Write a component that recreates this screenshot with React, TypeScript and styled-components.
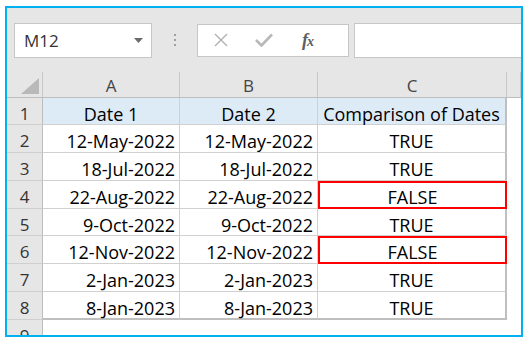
import styled, { createGlobalStyle } from 'styled-components'

const GlobalStyle = createGlobalStyle`
  html, body {
    margin: 0;
    padding: 0;
    background: #ffffff;
  }
  body {
    font-family: "Open Sans", "Liberation Sans", sans-serif;
  }
`

const Frame = styled.div`
  margin: 6px 0 0 5px;
  width: 514px;
  height: 327px;
  border: 2px solid #00b0f0;
  overflow: hidden;
  background: #ffffff;
  display: flex;
  flex-direction: column;
`

const FormulaBar = styled.div`
  height: 64px;
  flex-shrink: 0;
  background: #e6e6e6;
  display: flex;
  align-items: center;
  padding: 0 0 0 7px;
`

const NameBox = styled.div`
  box-sizing: border-box;
  width: 138px;
  height: 35px;
  background: #ffffff;
  border: 1px solid #c6c6c6;
  display: flex;
  align-items: center;
  justify-content: space-between;
  padding: 0 8px 0 9px;
  font-size: 17px;
  color: #333333;
`

const Dots = styled.div`
  width: 45px;
  display: flex;
  flex-direction: column;
  align-items: center;
  gap: 3px;

  span {
    width: 2px;
    height: 2px;
    background: #a0a0a0;
  }
`

const ButtonBox = styled.div`
  width: 152px;
  height: 33px;
  box-sizing: border-box;
  background: #ffffff;
  border: 1px solid #c6c6c6;
  display: flex;
  align-items: center;
  padding: 0 0 0 16px;
  gap: 27px;
`

const Fx = styled.span`
  font-family: "Liberation Serif", serif;
  font-style: italic;
  font-weight: bold;
  font-size: 18px;
  color: #5e5e5e;
  margin-left: 2px;
  letter-spacing: -1px;

  sub {
    font-size: 14px;
    vertical-align: 0;
  }
`

const FormulaInput = styled.div`
  flex: 1;
  margin-left: 5px;
  height: 35px;
  box-sizing: border-box;
  background: #ffffff;
  border: 1px solid #c6c6c6;
  border-right: none;
`

const Sheet = styled.div`
  flex: 1;
  display: flex;
  flex-direction: column;
`

const Row = styled.div<{ $h: number }>`
  display: grid;
  grid-template-columns: 36px 137px 138px 189px 1fr;
  grid-template-rows: ${(p) => p.$h}px;
  height: ${(p) => p.$h}px;
  flex-shrink: 0;
  line-height: 20px;
`

const HeadCell = styled.div`
  background: #e6e6e6;
  border-right: 1px solid #c8c8c8;
  border-bottom: 1px solid #bdbdbd;
  display: flex;
  align-items: center;
  justify-content: center;
  font-size: 17px;
  color: #444444;
  padding-top: 2px;
  box-sizing: border-box;
  min-height: 0;
`

const Corner = styled(HeadCell)`
  align-items: flex-end;
  justify-content: flex-end;
  padding: 0 3px 3px 0;
`

const RowNum = styled.div`
  background: #e6e6e6;
  border-right: 1px solid #bdbdbd;
  border-bottom: 1px solid #cfcfcf;
  display: flex;
  align-items: center;
  justify-content: center;
  font-size: 17px;
  color: #333333;
  box-sizing: border-box;
  padding-top: 5px;
  min-height: 0;
`

const Cell = styled.div<{ $align?: 'center' | 'right'; $head?: boolean; $flag?: boolean; $last?: boolean; $bottom?: boolean }>`
  background: ${(p) => (p.$head ? '#ddebf7' : '#ffffff')};
  border-right: ${(p) => (p.$last ? '2px solid #bfbfbf' : '1px solid #d0d0d0')};
  border-bottom: ${(p) => (p.$bottom ? '2px solid #bfbfbf' : '1px solid #d0d0d0')};
  box-sizing: border-box;
  min-height: 0;
  display: flex;
  align-items: center;
  justify-content: ${(p) => (p.$align === 'right' ? 'flex-end' : 'center')};
  padding: 5px 4px 0 4px;
  font-size: 18px;
  color: #000000;
  white-space: nowrap;

  ${(p) =>
    p.$flag &&
    `
    border: 2px solid #ff0000;
    padding-top: 3px;
  `}
`

const Blank = styled.div`
  background: #ffffff;
`

const rows = [
  { a: '12-May-2022', b: '12-May-2022', c: 'TRUE' },
  { a: '18-Jul-2022', b: '18-Jul-2022', c: 'TRUE' },
  { a: '22-Aug-2022', b: '22-Aug-2022', c: 'FALSE' },
  { a: '9-Oct-2022', b: '9-Oct-2022', c: 'TRUE' },
  { a: '12-Nov-2022', b: '12-Nov-2022', c: 'FALSE' },
  { a: '2-Jan-2023', b: '2-Jan-2023', c: 'TRUE' },
  { a: '8-Jan-2023', b: '8-Jan-2023', c: 'TRUE' },
]

const heights = [28, 28, 28, 27, 28, 28, 28]

export default function App() {
  return (
    <>
      <GlobalStyle />
      <Frame>
        <FormulaBar>
          <NameBox>
            <span>M12</span>
            <svg width="9" height="5" viewBox="0 0 9 5">
              <path d="M0 0 H9 L4.5 5 Z" fill="#6b6b6b" />
            </svg>
          </NameBox>
          <Dots>
            <span />
            <span />
            <span />
          </Dots>
          <ButtonBox>
            <svg width="14" height="14" viewBox="0 0 14 14">
              <path d="M1 1 L13 13 M13 1 L1 13" stroke="#b0b0b0" strokeWidth="1.4" />
            </svg>
            <svg width="18" height="14" viewBox="0 0 18 14">
              <path d="M1 7 L6.5 12.5 L17 1.5" stroke="#b8b8b8" strokeWidth="2.6" fill="none" />
            </svg>
            <Fx>
              f<sub>x</sub>
            </Fx>
          </ButtonBox>
          <FormulaInput />
        </FormulaBar>
        <Sheet>
          <Row $h={26}>
            <Corner>
              <svg width="18" height="16" viewBox="0 0 18 16">
                <path d="M18 0 V16 H0 Z" fill="#b9b9b9" />
              </svg>
            </Corner>
            <HeadCell>A</HeadCell>
            <HeadCell>B</HeadCell>
            <HeadCell>C</HeadCell>
            <HeadCell />
          </Row>
          <Row $h={27}>
            <RowNum>1</RowNum>
            <Cell $head>Date 1</Cell>
            <Cell $head>Date 2</Cell>
            <Cell $head $last>Comparison of Dates</Cell>
            <Blank />
          </Row>
          {rows.map((r, i) => (
            <Row $h={heights[i]} key={i}>
              <RowNum>{i + 2}</RowNum>
              <Cell $align="right" $bottom={i === rows.length - 1}>{r.a}</Cell>
              <Cell $align="right" $bottom={i === rows.length - 1}>{r.b}</Cell>
              <Cell $last $flag={r.c === 'FALSE'} $bottom={i === rows.length - 1}>{r.c}</Cell>
              <Blank />
            </Row>
          ))}
          <Row $h={28}>
            <RowNum>9</RowNum>
            <Blank />
            <Blank />
            <Blank />
            <Blank />
          </Row>
        </Sheet>
      </Frame>
    </>
  )
}
